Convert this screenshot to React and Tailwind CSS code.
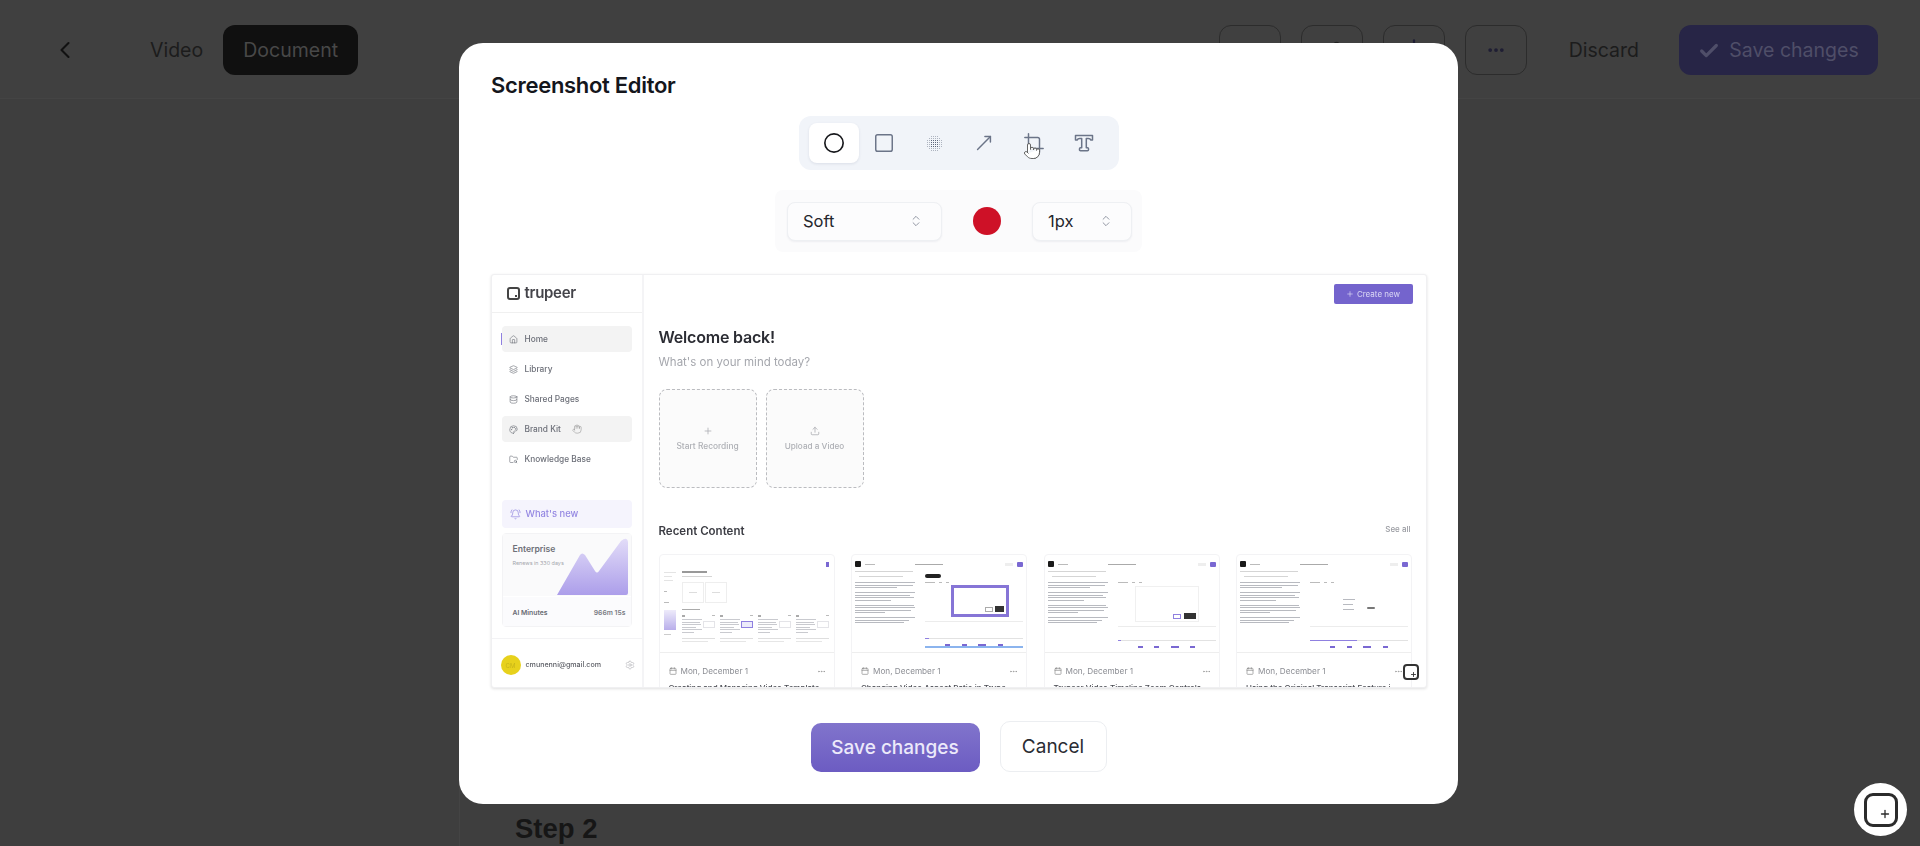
import React from "react";
import { ChevronLeft, Circle, Square, MoveUpRight, Crop, ChevronsUpDown, Pointer, Check, Ellipsis, Home, Layers, Database, Palette, FolderSearch, BellRing, Plus, Upload, Settings, Calendar, Hand, Download, Share2, Eye } from "lucide-react";

function DotsIcon() {
  const dots = [];
  for (let y = 0; y < 8; y++) for (let x = 0; x < 8; x++) {
    const d = Math.hypot(x - 3.5, y - 3.5);
    if (d > 4.3) continue;
    dots.push(<rect key={x + "-" + y} x={5 + x * 2} y={5 + y * 2} width="1" height="1" fill="#5d667a" opacity={d < 2.4 ? 1 : 0.45} shapeRendering="crispEdges" />);
  }
  return <svg width="24" height="24" viewBox="0 0 24 24">{dots}</svg>;
}

function TextToolIcon() {
  return (
    <svg width="24" height="24" viewBox="0 0 24 24" fill="none" stroke="#6b7488" strokeWidth="1.5" strokeLinejoin="round">
      <path d="M3.5 4.5h17v4.6h-1.6c-.5-1.2-1.3-1.7-2.5-1.7h-2.1v9.4h1.2c.6 0 1 .4 1 1v1c0 .6-.4 1-1 1H8.500c-.6 0-1-.4-1-1v-1c0-.6.4-1 1-1h1.200V7.400H7.600c-1.200 0-2 .5-2.500 1.700H3.500z" />
    </svg>
  );
}

function ToolBtn({ children, active }) {
  return (
    <div className={"w-[50px] h-10 flex items-center justify-center rounded-lg " + (active ? "bg-white shadow-[0_1px_3px_rgba(30,40,80,0.1)]" : "")}>
      {children}
    </div>
  );
}

function Select({ label, width }) {
  return (
    <div className={"h-[39px] flex items-center justify-between pl-[15px] pr-[18px] bg-[#fcfcfd] border border-[#eef0f3] rounded-lg shadow-[0_1px_2px_rgba(30,40,80,0.06)] " + width}>
      <span className="text-[16.5px] text-[#24262c]">{label}</span>
      <ChevronsUpDown size={14} strokeWidth={1.4} className="text-[#7b8190]" />
    </div>
  );
}

function NavRow({ icon: I, label, active, hovered, marker, extra }) {
  return (
    <div className={"relative h-[26px] flex items-center pl-[7px] gap-[7px] rounded-sm " + (active || hovered ? "bg-[#f3f3f3]" : "")}>
      {marker && <span className="absolute -left-px top-[7px] w-px h-3 bg-[#8f80e0]" />}
      <I size={9} strokeWidth={1.6} className="text-[#6a6d75]" />
      <span className="text-[8.3px] font-medium text-[#6c6f78]">{label}</span>
      {extra}
    </div>
  );
}

function Bars({ rows, w = "w-full", color = "bg-[#b8bac0]", gap = "gap-[1.5px]" }) {
  return (
    <div className={"flex flex-col " + gap + " " + w}>
      {rows.map((r, i) => <div key={i} className={"h-px " + color} style={{ width: r + "%" }} />)}
    </div>
  );
}

function DocText() {
  return (
    <div className="w-[60px] flex flex-col gap-[4px]">
      <Bars rows={[100, 96, 70]} />
      <Bars rows={[100, 92, 98, 60]} />
      <Bars rows={[98, 100, 94, 50]} />
      <Bars rows={[100, 90, 82]} />
    </div>
  );
}

function DocHead() {
  return (
    <div className="flex flex-col gap-[4px]">
      <div className="flex items-center gap-1">
        <div className="w-[6px] h-[6px] bg-[#1a1a1a] rounded-[1px]" />
        <div className="w-[10px] h-px bg-[#bbb]" />
        <div className="w-[28px] h-px bg-[#aaa] ml-[36px]" />
        <div className="w-[8px] h-[3px] bg-[#eee] ml-auto" />
        <div className="w-[6px] h-[5px] bg-[#7a68d2] rounded-[1px]" />
      </div>
      <div className="w-[58px] h-px bg-[#d5d5d5]" />
      <div className="w-[44px] h-px bg-[#d5d5d5] ml-1" />
    </div>
  );
}

function Timeline({ blue, line = 40 }) {
  return (
    <div className="mt-auto flex flex-col gap-[5px]">
      <div className="h-px bg-[#e2e2e2] w-full"><div className="h-px bg-[#8f80e0]" style={{ width: line + "%" }} /></div>
      <div className={"flex justify-between px-[20px] " + (blue ? "border-b-2 border-[#8bb4ee]" : "")}>
        <div className="w-[5px] h-[2px] bg-[#7a68d2]" />
        <div className="w-[5px] h-[2px] bg-[#7a68d2]" />
        <div className="w-[8px] h-[2px] bg-[#7a68d2]" />
        <div className="w-[5px] h-[2px] bg-[#7a68d2]" />
      </div>
    </div>
  );
}

function MiniThumb({ purple }) {
  return (
    <div className="flex-1 flex flex-col gap-[2px]">
      <div className="flex justify-between"><div className="w-[3px] h-[2px] bg-[#aaa]" /><div className="w-[3px] h-[1px] bg-[#bbb]" /></div>
      <div className="flex gap-[1px] h-[16px]">
        <div className="flex-1"><Bars rows={[100, 90, 95, 70, 100, 60]} color="bg-[#c9cacf]" /></div>
        <div className={"w-[12px] h-[7px] mt-[2px] " + (purple ? "border border-[#8f80e0] bg-[#ecebfa]" : "border border-[#e4e4e8]")} />
      </div>
      <div className="h-px bg-[#dedede] mt-[1px]" />
      <div className="h-px bg-[#e6e6e6] w-[80%]" />
    </div>
  );
}

function ThumbDash() {
  return (
    <div className="h-full relative flex gap-[6px] pl-[4px] pr-[5px] pt-[16px] pb-1 blur-[0.5px]">
      <span className="absolute top-[7px] right-[5px] w-[3px] h-[5px] bg-[#7a68d2]" />
      <div className="w-[12px] flex flex-col pt-[1px]">
        <Bars rows={[100, 70, 80]} gap="gap-[3px]" color="bg-[#e4e4e4]" />
        <div className="w-[3px] h-[1px] bg-[#bbb] mt-[10px]" />
        <div className="w-[5px] h-[1px] bg-[#bbb] mt-[10px]" />
        <div className="h-[20px] mt-[7px] bg-gradient-to-t from-[#b9aeea] to-[#eeebfa]" />
        <div className="w-[7px] h-px bg-[#ccc] mt-[4px]" />
      </div>
      <div className="flex-1 flex flex-col">
        <div className="w-[25px] h-[2px] bg-[#999]" />
        <div className="w-[30px] h-px bg-[#d5d5d5] mt-[3px]" />
        <div className="flex gap-[1px] mt-[5px]">
          <div className="w-[22px] h-[21px] border border-[#eee] flex items-center justify-center"><div className="w-[8px] h-px bg-[#ddd]" /></div>
          <div className="w-[22px] h-[21px] border border-[#eee] flex items-center justify-center"><div className="w-[8px] h-px bg-[#ddd]" /></div>
        </div>
        <div className="w-[18px] h-px bg-[#aaa] mt-[6px]" />
        <div className="flex gap-[5px] mt-[5px]">
          <MiniThumb />
          <MiniThumb purple />
          <MiniThumb />
          <MiniThumb />
        </div>
      </div>
    </div>
  );
}

function ThumbDoc({ kind }) {
  return (
    <div className="h-full flex flex-col px-[3px] pt-[6px] pb-1 blur-[0.5px]">
      <DocHead />
      <div className="flex gap-[10px] mt-[5px] flex-1">
        <DocText />
        <div className="flex-1 flex flex-col relative">
          {kind === 2 && <div className="absolute -top-[8px] left-0 w-[16px] h-[4px] bg-[#222] rounded-sm" />}
          <div className="flex gap-1"><div className="w-[10px] h-px bg-[#bbb]" /><div className="w-[3px] h-px bg-[#bbb]" /><div className="w-[3px] h-px bg-[#bbb]" /></div>
          {kind === 2 && (
            <div className="w-[58px] h-[32px] border-[3px] border-[#8675d6] self-end mr-[14px] mt-[2px] flex items-end justify-end p-[2px] gap-[2px]">
              <div className="w-[8px] h-[5px] border border-[#aaa]" />
              <div className="w-[9px] h-[6px] bg-[#333]" />
            </div>
          )}
          {kind === 3 && (
            <div className="w-[64px] h-[36px] self-center mt-[3px] border border-[#f0f0f0] flex items-end justify-end p-[2px] gap-[3px]">
              <div className="w-[8px] h-[5px] border border-[#8f80e0]" />
              <div className="w-[12px] h-[6px] bg-[#333]" />
            </div>
          )}
          {kind === 4 && (
            <div className="h-[36px] mt-[3px] flex items-center justify-center gap-3">
              <Bars rows={[100, 80, 90]} w="w-[12px]" gap="gap-[4px]" />
              <div className="w-[8px] h-[2px] bg-[#777] rounded-sm mt-2" />
            </div>
          )}
          <div className="h-px bg-[#ececec] mt-[4px]" />
          <Timeline blue={kind === 2} line={kind === 4 ? 48 : 4} />
        </div>
      </div>
    </div>
  );
}

function RecentCard({ title, children }) {
  return (
    <div className="w-[176px] shrink-0 border border-[#f3f3f5] rounded-sm bg-white">
      <div className="h-[98px] border-b border-[#eeeeee] overflow-hidden">{children}</div>
      <div className="flex items-center pl-[9px] pr-[8px] pt-[12px] gap-1">
        <Calendar size={8} className="text-[#888]" />
        <span className="text-[8.2px] text-[#8b8d93]">Mon, December 1</span>
        <Ellipsis size={9} className="text-[#999] ml-auto" />
      </div>
      <div className="pl-[9px] mt-[5px] text-[8px] font-medium text-[#4a4c53] whitespace-nowrap">{title}</div>
    </div>
  );
}

function ScreenshotPreview() {
  return (
    <div className="relative w-[936px] h-[414px] border border-[#f0f0f2] rounded-[3px] shadow-[0_1px_3px_rgba(0,0,0,0.12)] overflow-hidden flex bg-white mt-[22px]">
      <div className="w-[152px] shrink-0 border-r-2 border-[#f4f4f6] flex flex-col blur-[0.45px]">
        <div className="h-[38px] border-b border-[#f0f0f0] flex items-center pl-[15px] gap-[5px] shrink-0">
          <span className="relative w-[13px] h-[13px] border-2 border-[#444] rounded-[3px]">
            <span className="absolute right-[1px] bottom-[1px] w-[2px] h-[2px] bg-[#444]" />
          </span>
          <span className="text-[15px] font-semibold text-[#44444a] tracking-[-0.3px]">trupeer</span>
        </div>
        <div className="px-[10px] pt-[13px] flex flex-col gap-1">
          <NavRow icon={Home} label="Home" active marker />
          <NavRow icon={Layers} label="Library" />
          <NavRow icon={Database} label="Shared Pages" />
          <NavRow icon={Palette} label="Brand Kit" hovered extra={<Hand size={10} strokeWidth={1.2} className="text-[#888] ml-[4px]" />} />
          <NavRow icon={FolderSearch} label="Knowledge Base" />
        </div>
        <div className="mx-[10px] mt-[28px] h-[28px] bg-[#f5f4fd] flex items-center pl-[8px] gap-[5px] rounded-sm">
          <BellRing size={11} strokeWidth={1.5} className="text-[#8e80de]" />
          <span className="text-[9.4px] font-medium text-[#9487e2]">What's new</span>
        </div>
        <div className="relative mx-[10px] mt-[5px] h-[94px] border border-[#f3f3f5] rounded-sm flex flex-col">
          <div className="h-[62px] bg-[#fafafb] pl-[10px] pt-[9px]">
            <div className="text-[8.6px] font-semibold text-[#6e7078] leading-[13px]">Enterprise</div>
            <div className="text-[5.4px] text-[#a4a6ac] mt-[3px]">Renews in 330 days</div>
          </div>
          <svg className="absolute left-[54px] top-[4px]" width="73" height="58" viewBox="0 0 73 58">
            <defs>
              <linearGradient id="ent" x1="0" y1="0" x2="0" y2="1">
                <stop offset="0" stopColor="#e2dcf8" />
                <stop offset="1" stopColor="#ac9eea" />
              </linearGradient>
            </defs>
            <path d="M0 57 L23 17 Q25 14 28 17 L38 33 Q40 36 42 33 L64 3 Q70 -2 71 4 L71 55 Q71 57 69 57Z" fill="url(#ent)" />
          </svg>
          <div className="flex-1 bg-[#fbfbfd] flex items-center justify-between pl-[10px] pr-[5px] pt-[3px] border-t border-white">
            <span className="text-[6.8px] font-semibold text-[#686a72]">AI Minutes</span>
            <span className="text-[6.8px] font-semibold text-[#7a7c84]">966m 15s</span>
          </div>
        </div>
        <div className="h-px bg-[#f3f3f5] mt-[11px]" />
        <div className="flex items-center pl-[9px] pr-[7px] mt-[16px] gap-[5px]">
          <span className="w-5 h-5 rounded-full bg-[#e7d11c] flex items-center justify-center text-[6px] text-[#c6b41a] shrink-0">CM</span>
          <span className="text-[7.1px] font-medium text-[#5d5f66]">cmunenni@gmail.com</span>
          <Settings size={10} strokeWidth={1.2} className="text-[#a0a0a6] ml-auto" />
        </div>
      </div>
      <div className="flex-1 min-w-0 pl-[15px] flex flex-col blur-[0.45px]">
        <div className="flex justify-end pr-[13px] pt-[9px]">
          <div className="w-[79px] h-[20px] bg-[#7464cd] rounded-[2px] flex items-center justify-center gap-[3px] text-[8px] text-[#dcd8f5]">
            <Plus size={8} />Create new
          </div>
        </div>
        <div className="text-[16px] font-semibold text-[#2b2c33] leading-[22px] mt-[22px] tracking-[-0.2px]">Welcome back!</div>
        <div className="text-[11.5px] text-[#a5a7ad] leading-4 mt-[6px]">What's on your mind today?</div>
        <div className="flex gap-[9px] mt-[19px]">
          <div className="w-[98px] h-[99px] border border-dashed border-[#bbbcc0] rounded-lg bg-[#fbfbfb] flex flex-col items-center justify-center gap-[4px] pt-[2px] text-[#aeb0b5]">
            <Plus size={10} />
            <span className="text-[8.4px] font-medium">Start Recording</span>
          </div>
          <div className="w-[98px] h-[99px] border border-dashed border-[#bbbcc0] rounded-lg bg-[#fbfbfb] flex flex-col items-center justify-center gap-[4px] pt-[2px] text-[#aeb0b5]">
            <Upload size={10} />
            <span className="text-[8.2px] font-medium">Upload a Video</span>
          </div>
        </div>
        <div className="flex items-center justify-between pr-[15px] mt-[36px] h-4">
          <span className="text-[11.5px] font-semibold text-[#3c3d44]">Recent Content</span>
          <span className="text-[8px] font-medium text-[#9a9ca2] -mt-[7px]">See all</span>
        </div>
        <div className="flex gap-[16.5px] mt-[14px]">
          <RecentCard title="Creating and Managing Video Template"><ThumbDash /></RecentCard>
          <RecentCard title="Changing Video Aspect Ratio in Trupe"><ThumbDoc kind={2} /></RecentCard>
          <RecentCard title="Trupeer Video Timeline Zoom Controls"><ThumbDoc kind={3} /></RecentCard>
          <RecentCard title="Using the Original Transcript Feature i"><ThumbDoc kind={4} /></RecentCard>
        </div>
      </div>
      <span className="absolute right-[7px] top-[389px] w-4 h-4 rounded-[4px] border-2 border-[#333] bg-white flex items-end justify-end">
        <Plus size={7} strokeWidth={3} className="text-[#333]" />
      </span>
    </div>
  );
}

export default function App() {
  return (
    <div className="relative h-[846px] w-full overflow-hidden bg-[#3e3e3e] font-['Inter',sans-serif]">
      <header className="h-[99px] pt-[2px] border-b border-[#444444] bg-[#404040] flex items-center">
        <ChevronLeft size={28} strokeWidth={1.8} className="ml-[51px] text-[#111]" />
        <span className="ml-[71px] text-[19.5px] text-[#1c1c1c] pt-px">Video</span>
        <div className="ml-[20px] w-[135px] h-[50px] rounded-xl bg-[#101010] flex items-center justify-center pt-px text-[19.5px] text-[#484848]">Document</div>
        <div className="ml-auto flex items-center gap-5">
          <div className="w-[62px] h-[50px] rounded-xl border border-[#2c2c2c] flex items-center justify-center"><Eye size={18} className="text-[#222]" /></div>
          <div className="w-[62px] h-[50px] rounded-xl border border-[#2c2c2c] flex items-center justify-center"><Share2 size={18} className="text-[#222]" /></div>
          <div className="w-[62px] h-[50px] rounded-xl border border-[#2c2c2c] flex items-center justify-center"><Download size={26} className="text-[#1e1d33]" /></div>
          <div className="w-[62px] h-[50px] rounded-xl border border-[#2c2c2c] flex items-center justify-center"><Ellipsis size={20} strokeWidth={2.5} className="text-[#1e1d33]" /></div>
        </div>
        <span className="ml-[42px] text-[19.5px] text-[#1c1c1c] pt-px">Discard</span>
        <div className="ml-[40px] mr-[42px] w-[199px] h-[50px] rounded-xl bg-[#272546] flex items-center justify-center gap-[9px] pt-px text-[19.5px] text-[#4f4e68]">
          <Check size={22} strokeWidth={3.5} className="text-[#4f4e69]" />
          Save changes
        </div>
      </header>
      <main className="w-[999px] ml-[459px] h-[747px] flex flex-col justify-end border-l border-[#444444] pl-[55px] pb-[1px]">
        <h2 className="font-['Liberation_Sans',sans-serif] font-bold text-[27.5px] leading-8 text-[#161616]">Step 2</h2>
      </main>

      <div className="absolute left-[459px] top-[43px] w-[999px] h-[761px] bg-white rounded-3xl flex flex-col items-center px-8">
        <h1 className="self-start mt-[28px] text-[22px] leading-7 font-semibold text-[#14161c] tracking-[-0.3px]">Screenshot Editor</h1>
        <div className="mt-[17px] h-[54px] w-[320px] rounded-xl bg-[#f1f4f9] flex items-center px-[10px]">
          <ToolBtn active><Circle size={22} strokeWidth={1.8} className="text-[#17181c]" /></ToolBtn>
          <ToolBtn><Square size={22} strokeWidth={1.6} className="text-[#6b7488]" /></ToolBtn>
          <ToolBtn><DotsIcon /></ToolBtn>
          <ToolBtn><MoveUpRight size={22} strokeWidth={1.6} className="text-[#6b7488]" /></ToolBtn>
          <ToolBtn>
            <span className="relative">
              <Crop size={22} strokeWidth={1.6} className="text-[#6b7488]" />
              <Pointer size={18} strokeWidth={1.2} fill="#ffffff" className="absolute left-0 top-[10px] text-[#555]" />
            </span>
          </ToolBtn>
          <ToolBtn><TextToolIcon /></ToolBtn>
        </div>
        <div className="mt-5 h-[62px] w-[367px] bg-[#fbfbfc] rounded-lg flex items-center pl-[12px] pr-[10px]">
          <Select label="Soft" width="w-[155px]" />
          <span className="ml-[31px] w-[28px] h-[28px] rounded-full bg-[#ce1127]" />
          <div className="ml-[31px]"><Select label="1px" width="w-[100px]" /></div>
        </div>
        <ScreenshotPreview />
        <div className="mt-[33px] flex items-end gap-5">
          <div className="w-[169px] h-[49px] rounded-[10px] bg-gradient-to-b from-[#8174cc] to-[#6c5cc2] flex items-center justify-center pt-[2px] text-[19px] font-medium text-[#ece9fa]">Save changes</div>
          <div className="w-[107px] h-[51px] rounded-[10px] bg-white border border-[#eceef1] flex items-center justify-center pt-[2px] text-[19px] text-[#2a2c33]">Cancel</div>
        </div>
      </div>

      <div className="absolute left-[1854px] top-[783px] w-[53px] h-[53px] rounded-full bg-white flex items-center justify-center">
        <span className="w-[34px] h-[34px] rounded-[9px] border-[3.5px] border-[#2b2b2b] flex items-end justify-end pr-[4px] pb-[4px]">
          <Plus size={12} strokeWidth={2.6} className="text-[#2b2b2b]" />
        </span>
      </div>
    </div>
  );
}
